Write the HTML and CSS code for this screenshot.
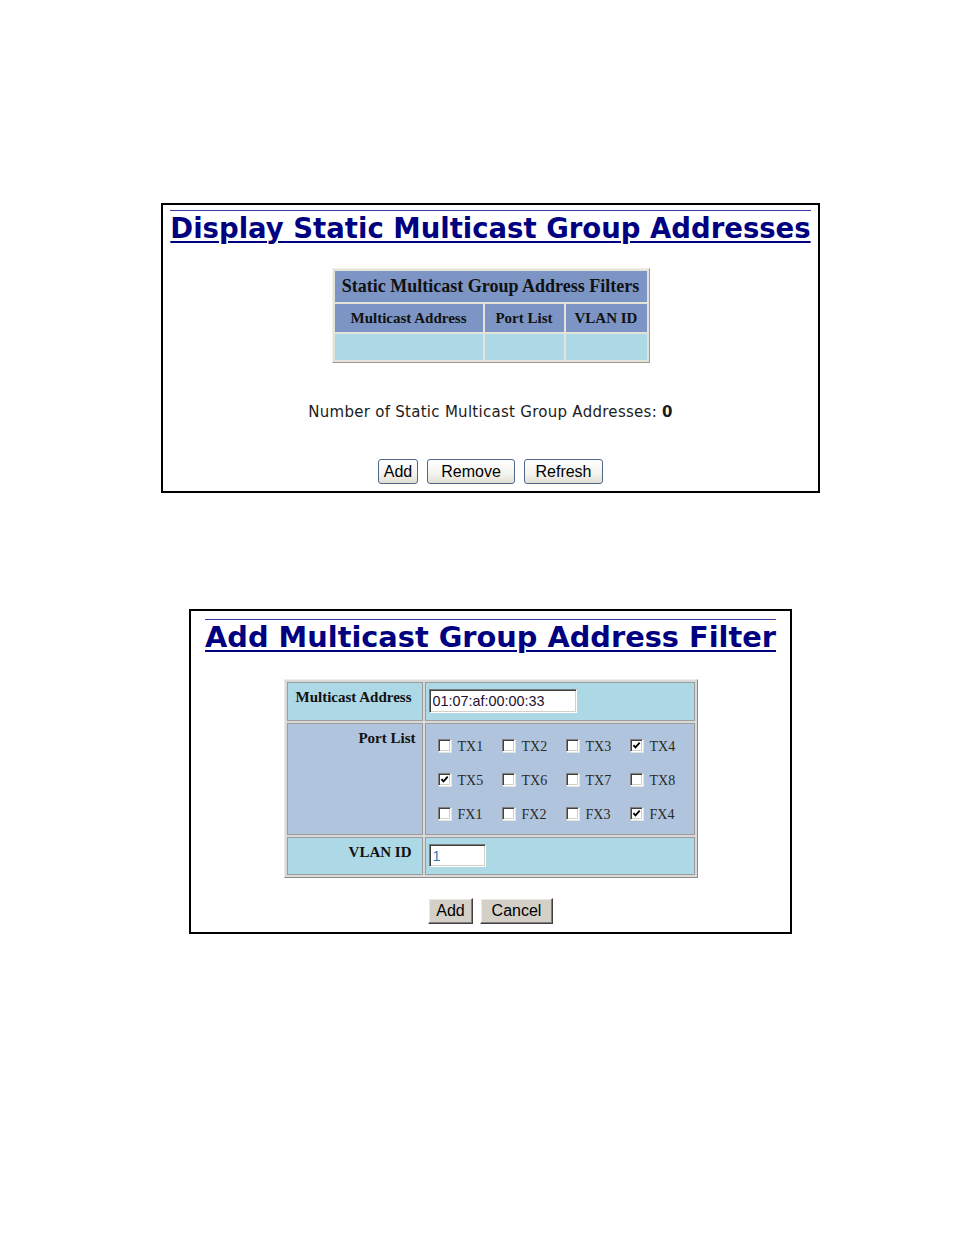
FILE: index.html
```html
<!DOCTYPE html>
<html lang="en">
<head>
<meta charset="utf-8">
<title>Static Multicast Group Addresses</title>
<link rel="stylesheet" href="styles.css">
</head>
<body>
<div class="page">

  <section class="panel panel-display">
    <div class="title-wrap"><h1 class="title title-display">Display Static Multicast Group Addresses</h1></div>
    <table class="filters">
      <tr class="cap-row"><th colspan="3" class="cap">Static Multicast Group Address Filters</th></tr>
      <tr class="heads"><th class="c1">Multicast Address</th><th class="c2">Port List</th><th class="c3">VLAN ID</th></tr>
      <tr class="empty"><td class="c1"></td><td class="c2"></td><td class="c3"></td></tr>
    </table>
    <p class="count">Number of Static Multicast Group Addresses: <b>0</b></p>
    <div class="actions actions-display">
      <button type="button" class="xp b-add">Add</button>
      <button type="button" class="xp b-remove">Remove</button>
      <button type="button" class="xp b-refresh">Refresh</button>
    </div>
  </section>

  <section class="panel panel-add">
    <div class="title-wrap title-wrap-add"><h1 class="title title-add">Add Multicast Group Address Filter</h1></div>
    <table class="form">
      <tr class="row-addr">
        <th class="lbl">Multicast Address</th>
        <td class="val"><input type="text" class="txt txt-addr" value="01:07:af:00:00:33"></td>
      </tr>
      <tr class="row-ports">
        <th class="lbl lbl-ports">Port List</th>
        <td class="val val-ports">
          <div class="ports">
            <label class="port"><span class="cb"></span>TX1</label>
            <label class="port"><span class="cb"></span>TX2</label>
            <label class="port"><span class="cb"></span>TX3</label>
            <label class="port"><span class="cb on"><svg viewBox="0 0 9 9"><path d="M1.4 4.1 3.5 6.4 7.7 1.7"/></svg></span>TX4</label>
            <label class="port"><span class="cb on"><svg viewBox="0 0 9 9"><path d="M1.4 4.1 3.5 6.4 7.7 1.7"/></svg></span>TX5</label>
            <label class="port"><span class="cb"></span>TX6</label>
            <label class="port"><span class="cb"></span>TX7</label>
            <label class="port"><span class="cb"></span>TX8</label>
            <label class="port"><span class="cb"></span>FX1</label>
            <label class="port"><span class="cb"></span>FX2</label>
            <label class="port"><span class="cb"></span>FX3</label>
            <label class="port"><span class="cb on"><svg viewBox="0 0 9 9"><path d="M1.4 4.1 3.5 6.4 7.7 1.7"/></svg></span>FX4</label>
          </div>
        </td>
      </tr>
      <tr class="row-vlan">
        <th class="lbl">VLAN ID</th>
        <td class="val"><input type="text" class="txt txt-vlan" value="1"></td>
      </tr>
    </table>
    <div class="actions actions-add">
      <button type="button" class="classic b-add2">Add</button>
      <button type="button" class="classic b-cancel">Cancel</button>
    </div>
  </section>

</div>
</body>
</html>
```
FILE: styles.css
```css
html, body {
  margin: 0;
  padding: 0;
  background: #ffffff;
}

body {
  font-family: "DejaVu Sans", Verdana, sans-serif;
  color: #000;
}

.page {
  width: 927px;
  padding: 203px 0 0 27px;
}

.panel {
  box-sizing: border-box;
  border: 2px solid #000;
  margin: 0 auto;
}

.panel-display {
  width: 659px;
  height: 290px;
}

.panel-add {
  width: 603px;
  height: 325px;
  margin-top: 116px;
}

/* Titles */
.title-wrap {
  text-align: center;
  padding-top: 5px;
}

.title-wrap-add {
  padding-top: 8px;
}

.title {
  display: inline-block;
  margin: 0;
  font-family: "DejaVu Sans", Verdana, sans-serif;
  font-weight: bold;
  font-size: 28px;
  line-height: 34px;
  color: #000080;
  border-top: 1px solid #3a3aa6;
  text-decoration: underline;
  text-decoration-thickness: 1.5px;
  text-underline-offset: 3px;
}

.title-display {
  font-size: 27.5px;
}

.title-add {
  font-size: 28.8px;
}

/* Display table */
.filters {
  margin: 23px auto 0;
  border-collapse: separate;
  border-spacing: 2px;
  background: #e5e2d9;
  border: 1px solid;
  border-color: #f3f1ec #9d998e #9d998e #f3f1ec;
  font-family: "Liberation Serif", "Times New Roman", serif;
  color: #111;
}

.filters th,
.filters td {
  box-sizing: border-box;
  padding: 0;
  border: 0;
  text-align: center;
  vertical-align: middle;
}

.filters .cap {
  height: 31px;
  background: #7c95c5;
  font-size: 18px;
  font-weight: bold;
}

.filters .heads th {
  height: 28px;
  background: #7c95c5;
  font-size: 15px;
  font-weight: bold;
}

.filters .empty td {
  height: 26px;
  background: #add8e6;
}

.filters .c1 { width: 148px; }
.filters .c2 { width: 79px; }
.filters .c3 { width: 81px; }

.count {
  margin: 41px 0 0;
  text-align: center;
  font-size: 15px;
  line-height: 17px;
  letter-spacing: 0.28px;
  color: #1c1c1c;
}

.count b {
  font-weight: bold;
}

/* Buttons */
.actions {
  display: flex;
  justify-content: center;
}

.actions-display {
  margin-top: 38px;
  gap: 9px;
}

.actions-add {
  margin-top: 20px;
  gap: 7px;
}

.xp {
  box-sizing: border-box;
  height: 25px;
  padding: 0;
  font-family: "Liberation Sans", Arial, sans-serif;
  font-size: 16px;
  color: #000;
  border: 1px solid #50698a;
  border-radius: 3px;
  background: linear-gradient(#ffffff 0%, #f4f3ef 60%, #e2ded4 100%);
}

.b-add { width: 40px; }
.b-remove { width: 88px; }
.b-refresh { width: 79px; }

.classic {
  box-sizing: border-box;
  height: 26px;
  padding: 0;
  font-family: "Liberation Sans", Arial, sans-serif;
  font-size: 16px;
  color: #000;
  background: #d4d0c8;
  border: 1px solid;
  border-color: #ffffff #404040 #404040 #ffffff;
  box-shadow: inset -1px -1px #808080, inset 1px 1px #ebe9e4;
  border-radius: 0;
}

.b-add2 { width: 45px; }
.b-cancel { width: 73px; }

/* Add form table */
.form {
  margin: 25px auto 0;
  border-collapse: separate;
  border-spacing: 2px;
  background: #d9d9d9;
  border: 1px solid;
  border-color: #ececec #8a8a8a #8a8a8a #ececec;
  font-family: "Liberation Serif", "Times New Roman", serif;
}

.form th,
.form td {
  box-sizing: border-box;
  border: 1px solid #9c9c9c;
  padding: 0;
  vertical-align: top;
}

.form .lbl {
  width: 136px;
  text-align: right;
  padding: 6px 10px 0 0;
  font-size: 15px;
  line-height: 17px;
  font-weight: bold;
  color: #111;
}

.form .lbl-ports {
  padding-right: 6px;
}

.form .val {
  width: 264px;
  padding: 6px 0 0 3px;
}

.row-addr th,
.row-addr td {
  height: 39px;
  background: #add8e6;
}

.row-ports th,
.row-ports td {
  height: 112px;
  background: #b0c4de;
}

.row-vlan th,
.row-vlan td {
  height: 38px;
  background: #add8e6;
}

.form .val-ports {
  padding: 12px 0 0 12px;
}

.txt {
  box-sizing: border-box;
  margin: 0;
  padding: 0 2px 0 3px;
  font-family: "Liberation Sans", Arial, sans-serif;
  font-size: 14.4px;
  background: #fff;
  border: 1px solid;
  border-color: #7a7a7a #ffffff #ffffff #7a7a7a;
  box-shadow: inset 1px 1px #404040, inset -1px -1px #d4d0c8;
  outline: none;
}

.txt-addr {
  width: 148px;
  height: 24px;
  color: #1e1030;
}

.txt-vlan {
  width: 57px;
  height: 23px;
  color: #2b7bbb;
}

/* Port checkboxes */
.ports {
  display: grid;
  grid-template-columns: repeat(4, 64px);
  grid-auto-rows: 20px;
  row-gap: 14px;
}

.port {
  display: flex;
  align-items: center;
  gap: 7px;
  font-family: "Liberation Serif", "Times New Roman", serif;
  font-size: 14px;
  line-height: 20px;
  padding-top: 2px;
  color: #2a2a1e;
}

.cb {
  box-sizing: border-box;
  display: block;
  width: 13px;
  height: 13px;
  padding: 1px;
  margin-top: -3px;
  background: #fff;
  border: 1px solid;
  border-color: #808080 #ffffff #ffffff #808080;
  box-shadow: inset 1px 1px #404040, inset -1px -1px #d4d0c8, 1px 1px 0 #e4e4e4;
  flex: none;
}

.cb svg {
  display: block;
  width: 9px;
  height: 9px;
}

.cb path {
  fill: none;
  stroke: #000;
  stroke-width: 1.8;
}
```
